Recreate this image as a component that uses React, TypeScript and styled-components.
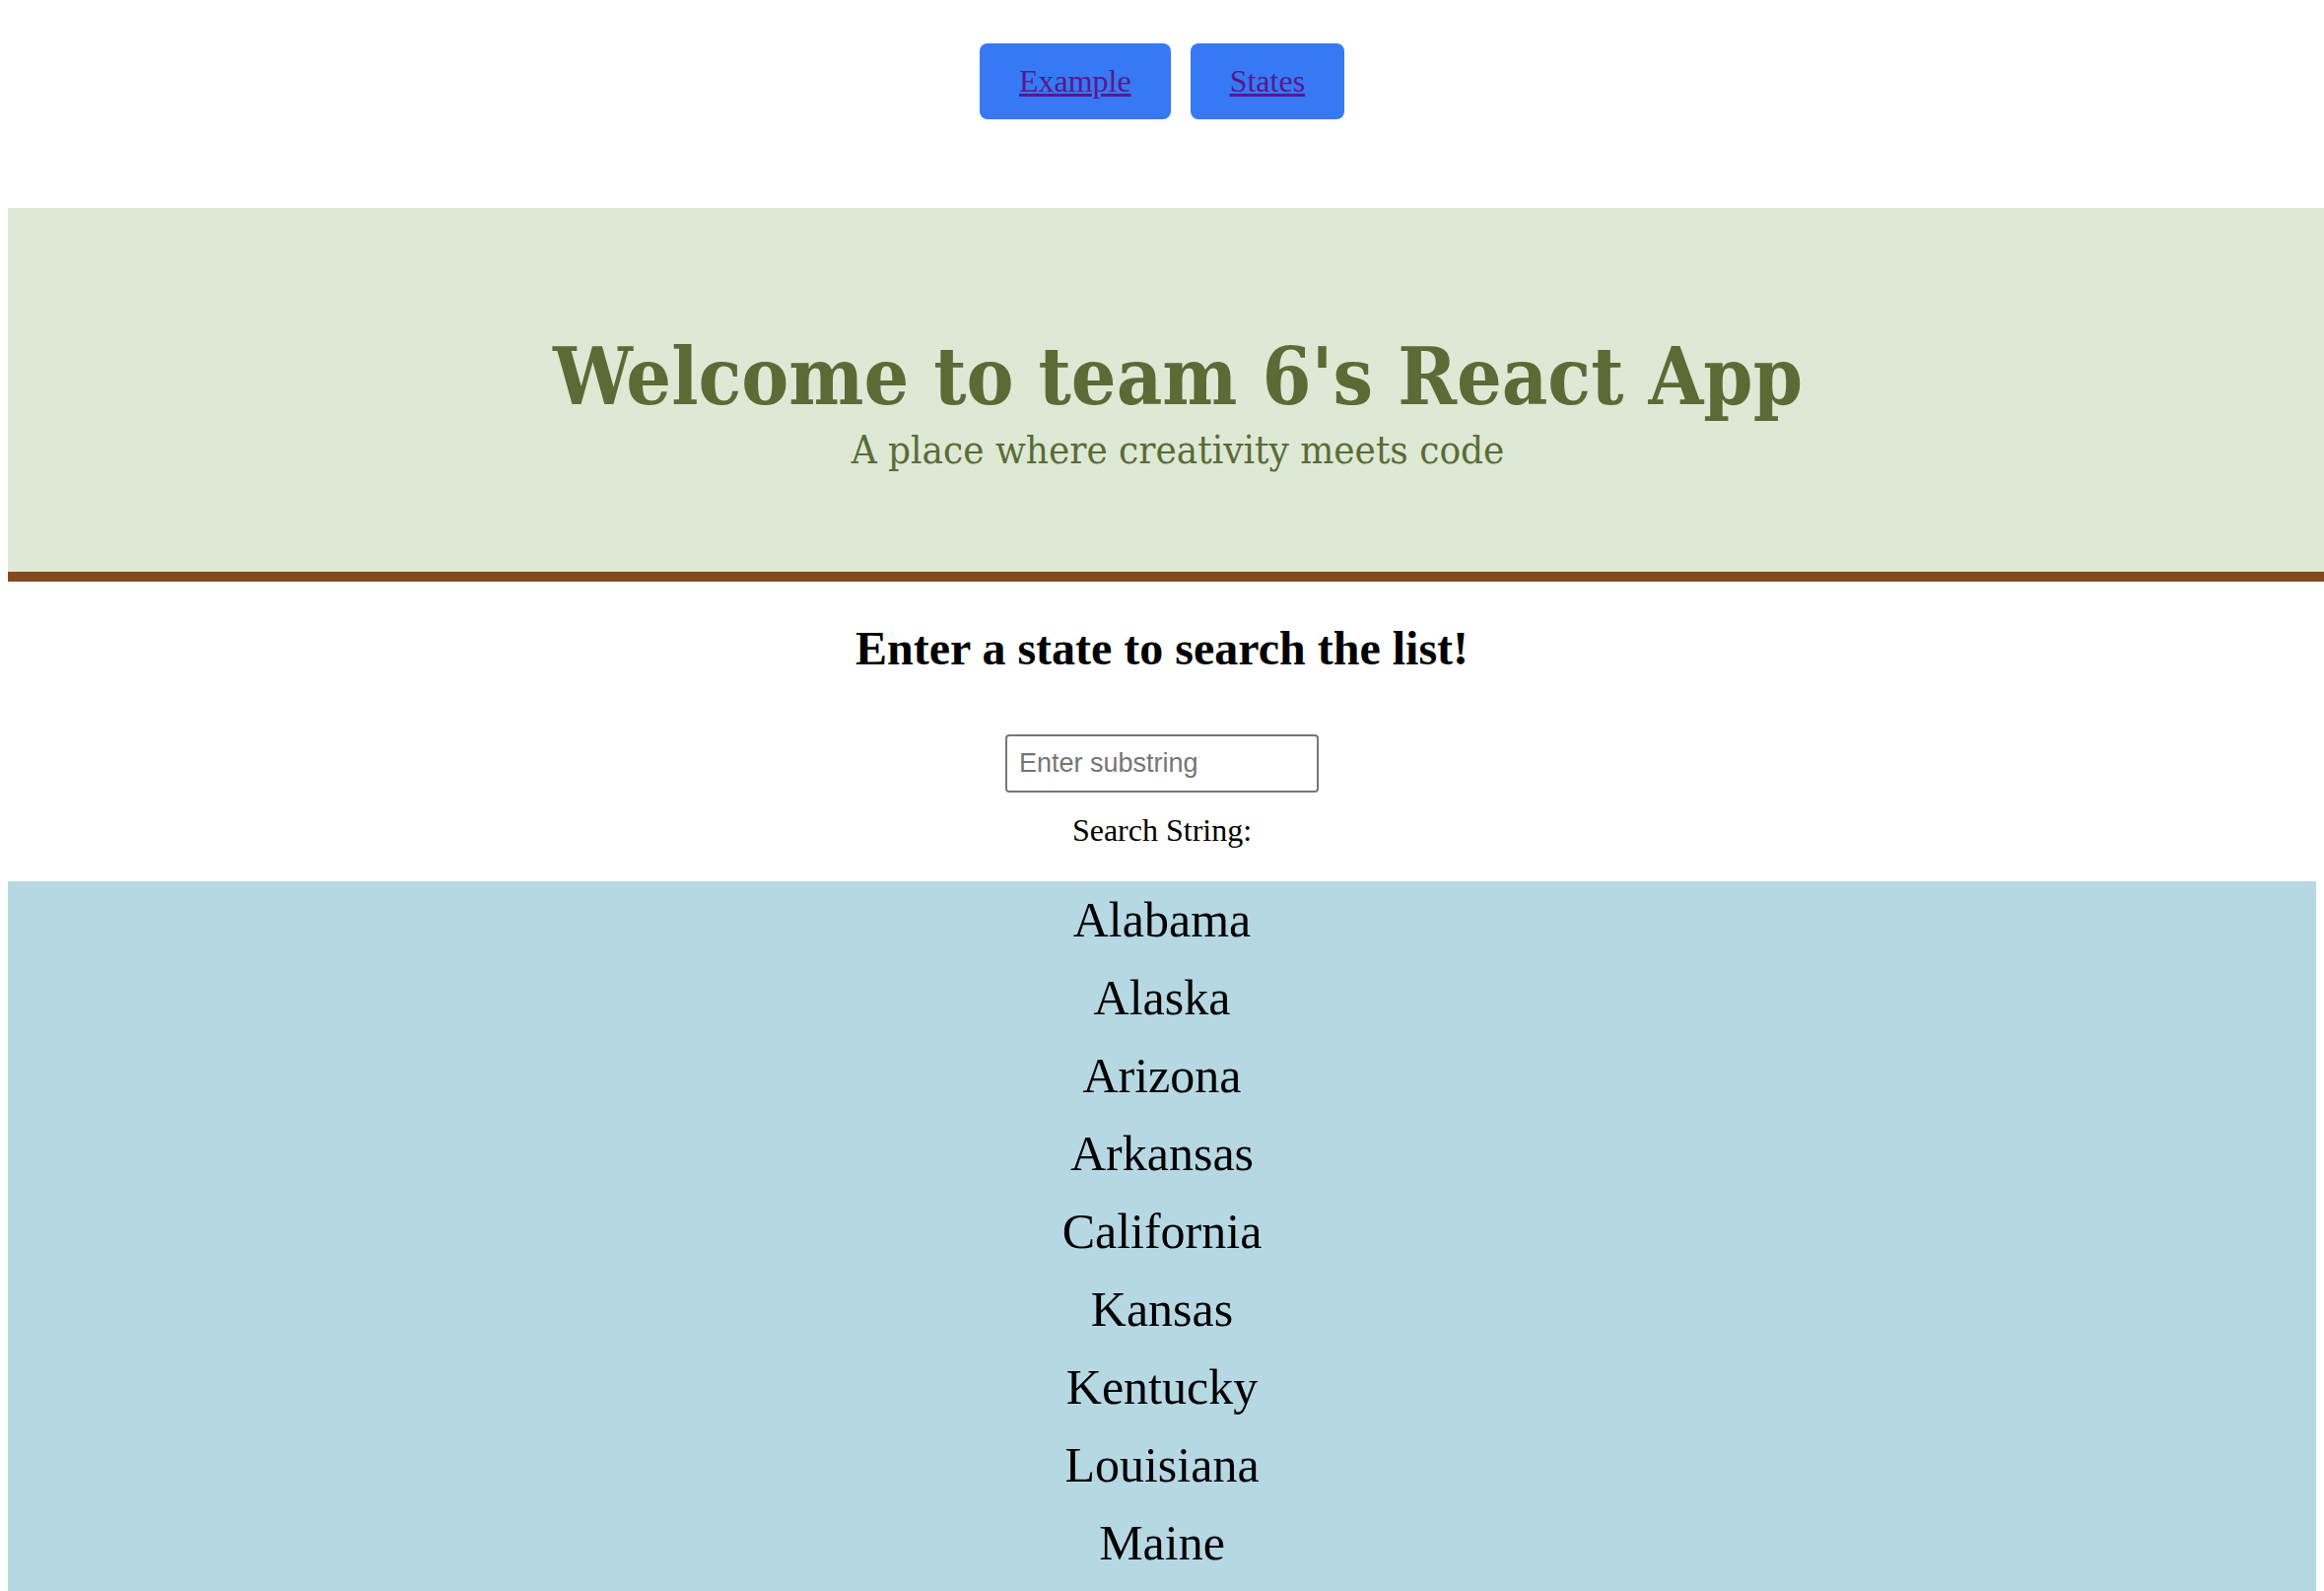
import React, { useState } from "react";
import styled, { createGlobalStyle } from "styled-components";

const GlobalStyle = createGlobalStyle`
  body {
    margin: 8px 0 8px 8px;
    background: #ffffff;
    color: #000000;
    font-family: "Liberation Serif", "Times New Roman", serif;
    font-size: 32px;
  }
`;

const Nav = styled.nav`
  display: flex;
  justify-content: center;
  gap: 20px;
  padding-top: 36px;
  margin: 0 8px 90px 0;
`;

const NavButton = styled.a`
  display: block;
  background: #3778f5;
  border-radius: 8px;
  padding: 20px 40px;
  font-size: 32px;
  line-height: 37px;
  color: #551a8b;
  text-decoration: underline;
`;

const Banner = styled.header`
  display: flex;
  flex-direction: column;
  align-items: center;
  padding: 131px 0 104px 24px;
  background: #dde9d5;
  border-bottom: 10px solid #834a20;
  color: #5b6b36;
  font-family: "DejaVu Serif Condensed", "DejaVu Serif", "Liberation Serif", serif;
  font-stretch: condensed;
`;

const Title = styled.h1`
  margin: 0;
  font-size: 80px;
  line-height: 80px;
  font-weight: 700;
`;

const Subtitle = styled.p`
  margin: 14px 0 0;
  font-size: 40px;
  line-height: 40px;
  font-weight: 400;
`;

const Search = styled.section`
  display: flex;
  flex-direction: column;
  align-items: center;
  margin-right: 8px;
`;

const Heading = styled.h2`
  margin: 40px 0 0;
  font-size: 48px;
  line-height: 55px;
  font-weight: 700;
`;

const SearchInput = styled.input`
  box-sizing: border-box;
  margin-top: 60px;
  width: 318px;
  height: 59px;
  padding: 0 12px;
  border: 2px solid #767676;
  border-radius: 4px;
  font-family: "Liberation Sans", Arial, sans-serif;
  font-size: 27px;
  color: #000;
  outline: none;
  &::placeholder {
    color: #757575;
  }
`;

const Label = styled.div`
  margin-top: 20px;
  font-size: 32px;
  line-height: 37px;
`;

const StateList = styled.div`
  margin: 33px 8px 0 0;
  background: #b6d8e3;
  text-align: center;
  font-size: 50px;
  line-height: 79px;
`;

const StateItem = styled.div`
  color: #000;
`;

const STATES = [
  "Alabama",
  "Alaska",
  "Arizona",
  "Arkansas",
  "California",
  "Kansas",
  "Kentucky",
  "Louisiana",
  "Maine",
  "Maryland",
  "Massachusetts",
];

export default function App() {
  const [query, setQuery] = useState("");
  const filtered = STATES.filter((s) =>
    s.toLowerCase().includes(query.toLowerCase())
  );
  return (
    <>
      <GlobalStyle />
      <Nav>
        <NavButton href="#example">Example</NavButton>
        <NavButton href="#states">States</NavButton>
      </Nav>
      <Banner>
        <Title>Welcome to team 6's React App</Title>
        <Subtitle>A place where creativity meets code</Subtitle>
      </Banner>
      <Search>
        <Heading>Enter a state to search the list!</Heading>
        <SearchInput
          placeholder="Enter substring"
          value={query}
          onChange={(e) => setQuery(e.target.value)}
        />
        <Label>Search String: {query}</Label>
      </Search>
      <StateList>
        {filtered.map((s) => (
          <StateItem key={s}>{s}</StateItem>
        ))}
      </StateList>
    </>
  );
}
